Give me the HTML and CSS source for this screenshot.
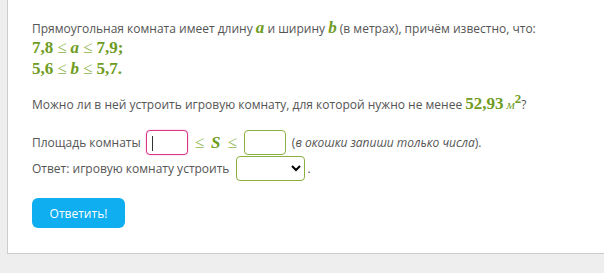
FILE: index.html
```html
<!DOCTYPE html>
<html lang="ru">
<head>
    <meta charset="UTF-8">
    <title>Задача</title>
    <link rel="stylesheet" href="styles.css">
</head>
<body>
    <div class="task">
        <p class="line">Прямоугольная комната имеет длину <span class="m">a</span> и ширину <span class="m">b</span> (в метрах), причём известно, что:</p>
        <div class="math-row first"><span class="num">7,8</span><span class="op">≤</span><span class="m">a</span><span class="op">≤</span><span class="num">7,9;</span></div>
        <div class="math-row"><span class="num">5,6</span><span class="op">≤</span><span class="m">b</span><span class="op">≤</span><span class="num">5,7.</span></div>

        <p class="question">Можно ли в ней устроить игровую комнату, для которой нужно не менее <span class="num">52,93</span><span class="unit">м</span><sup class="num">2</sup>?</p>

        <div class="answer-row area-row">
            <span>Площадь комнаты</span>
            <input type="text" class="box box-active" value="">
            <span class="op">≤</span><span class="m">S</span><span class="op">≤</span>
            <input type="text" class="box">
            <span class="hint">(<i>в окошки запиши только числа</i>).</span>
        </div>
        <div class="answer-row">
            <span>Ответ: игровую комнату устроить</span>
            <select class="choice">
                <option></option>
                <option>можно</option>
                <option>нельзя</option>
            </select>
            <span>.</span>
        </div>

        <button class="submit">Ответить!</button>
    </div>
</body>
</html>
```

FILE: styles.css
```css
body {
    margin: 0;
    background-color: #eeeeee;
    font-family: 'Open Sans', sans-serif;
    font-size: 12px;
    color: #555;
}

.task {
    margin-left: 7px;
    background-color: white;
    border: 1px solid #cccccc;
    border-top: none;
    border-right: none;
    padding: 19px 24px 23px 24px;
    height: 211px;
}

.line {
    margin: 0;
    line-height: 20px;
}

.line .m {
    line-height: 0;
}

.math-row {
    line-height: 20px;
}

.math-row.first {
    margin-top: -1px;
}

.math-row .op {
    margin: 0 4px;
}

.m, .num, .op {
    font-family: 'Liberation Serif', serif;
    font-size: 17px;
    color: #6e9c22;
}

.op {
    color: #8db44a;
}

.m {
    font-style: italic;
    font-weight: bold;
}

.num {
    font-weight: bold;
}

.unit {
    font-family: 'Liberation Serif', serif;
    font-style: italic;
    font-size: 13px;
    color: #6e9c22;
    margin-left: 3px;
}

sup.num {
    font-size: 13px;
    vertical-align: 6px;
    line-height: 0;
}

/* Question and answer fields */
.question {
    margin: 13px 0 0 0;
    line-height: 22px;
}

.answer-row {
    display: flex;
    align-items: center;
    height: 25px;
    margin-top: 1px;
}

.area-row {
    margin-top: 14px;
}

.area-row .op {
    margin: 0 7px;
}

.box {
    width: 42px;
    height: 25px;
    box-sizing: border-box;
    border: 1px solid #8ab03f;
    border-radius: 4px;
    margin: 0;
    padding: 0 4px;
    font-family: inherit;
    font-size: 13px;
}

.box-active {
    margin-left: 5px;
    border-color: #d9358a;
    box-shadow: 0 0 2px rgba(217, 53, 138, 0.4);
    background: linear-gradient(#333, #333) no-repeat 5px 5px / 1px 15px, white;
}

.hint {
    margin-left: 6px;
}

.choice {
    width: 69px;
    height: 25px;
    border: 1px solid #8ab03f;
    border-radius: 4px;
    background-color: white;
    margin: 0 2px 0 7px;
}

.submit {
    margin-top: 17px;
    background-color: #0eaef0;
    color: white;
    border: none;
    border-radius: 6px;
    width: 93px;
    height: 30px;
    font-family: 'Open Sans', sans-serif;
    font-size: 12px;
    cursor: pointer;
}
```
